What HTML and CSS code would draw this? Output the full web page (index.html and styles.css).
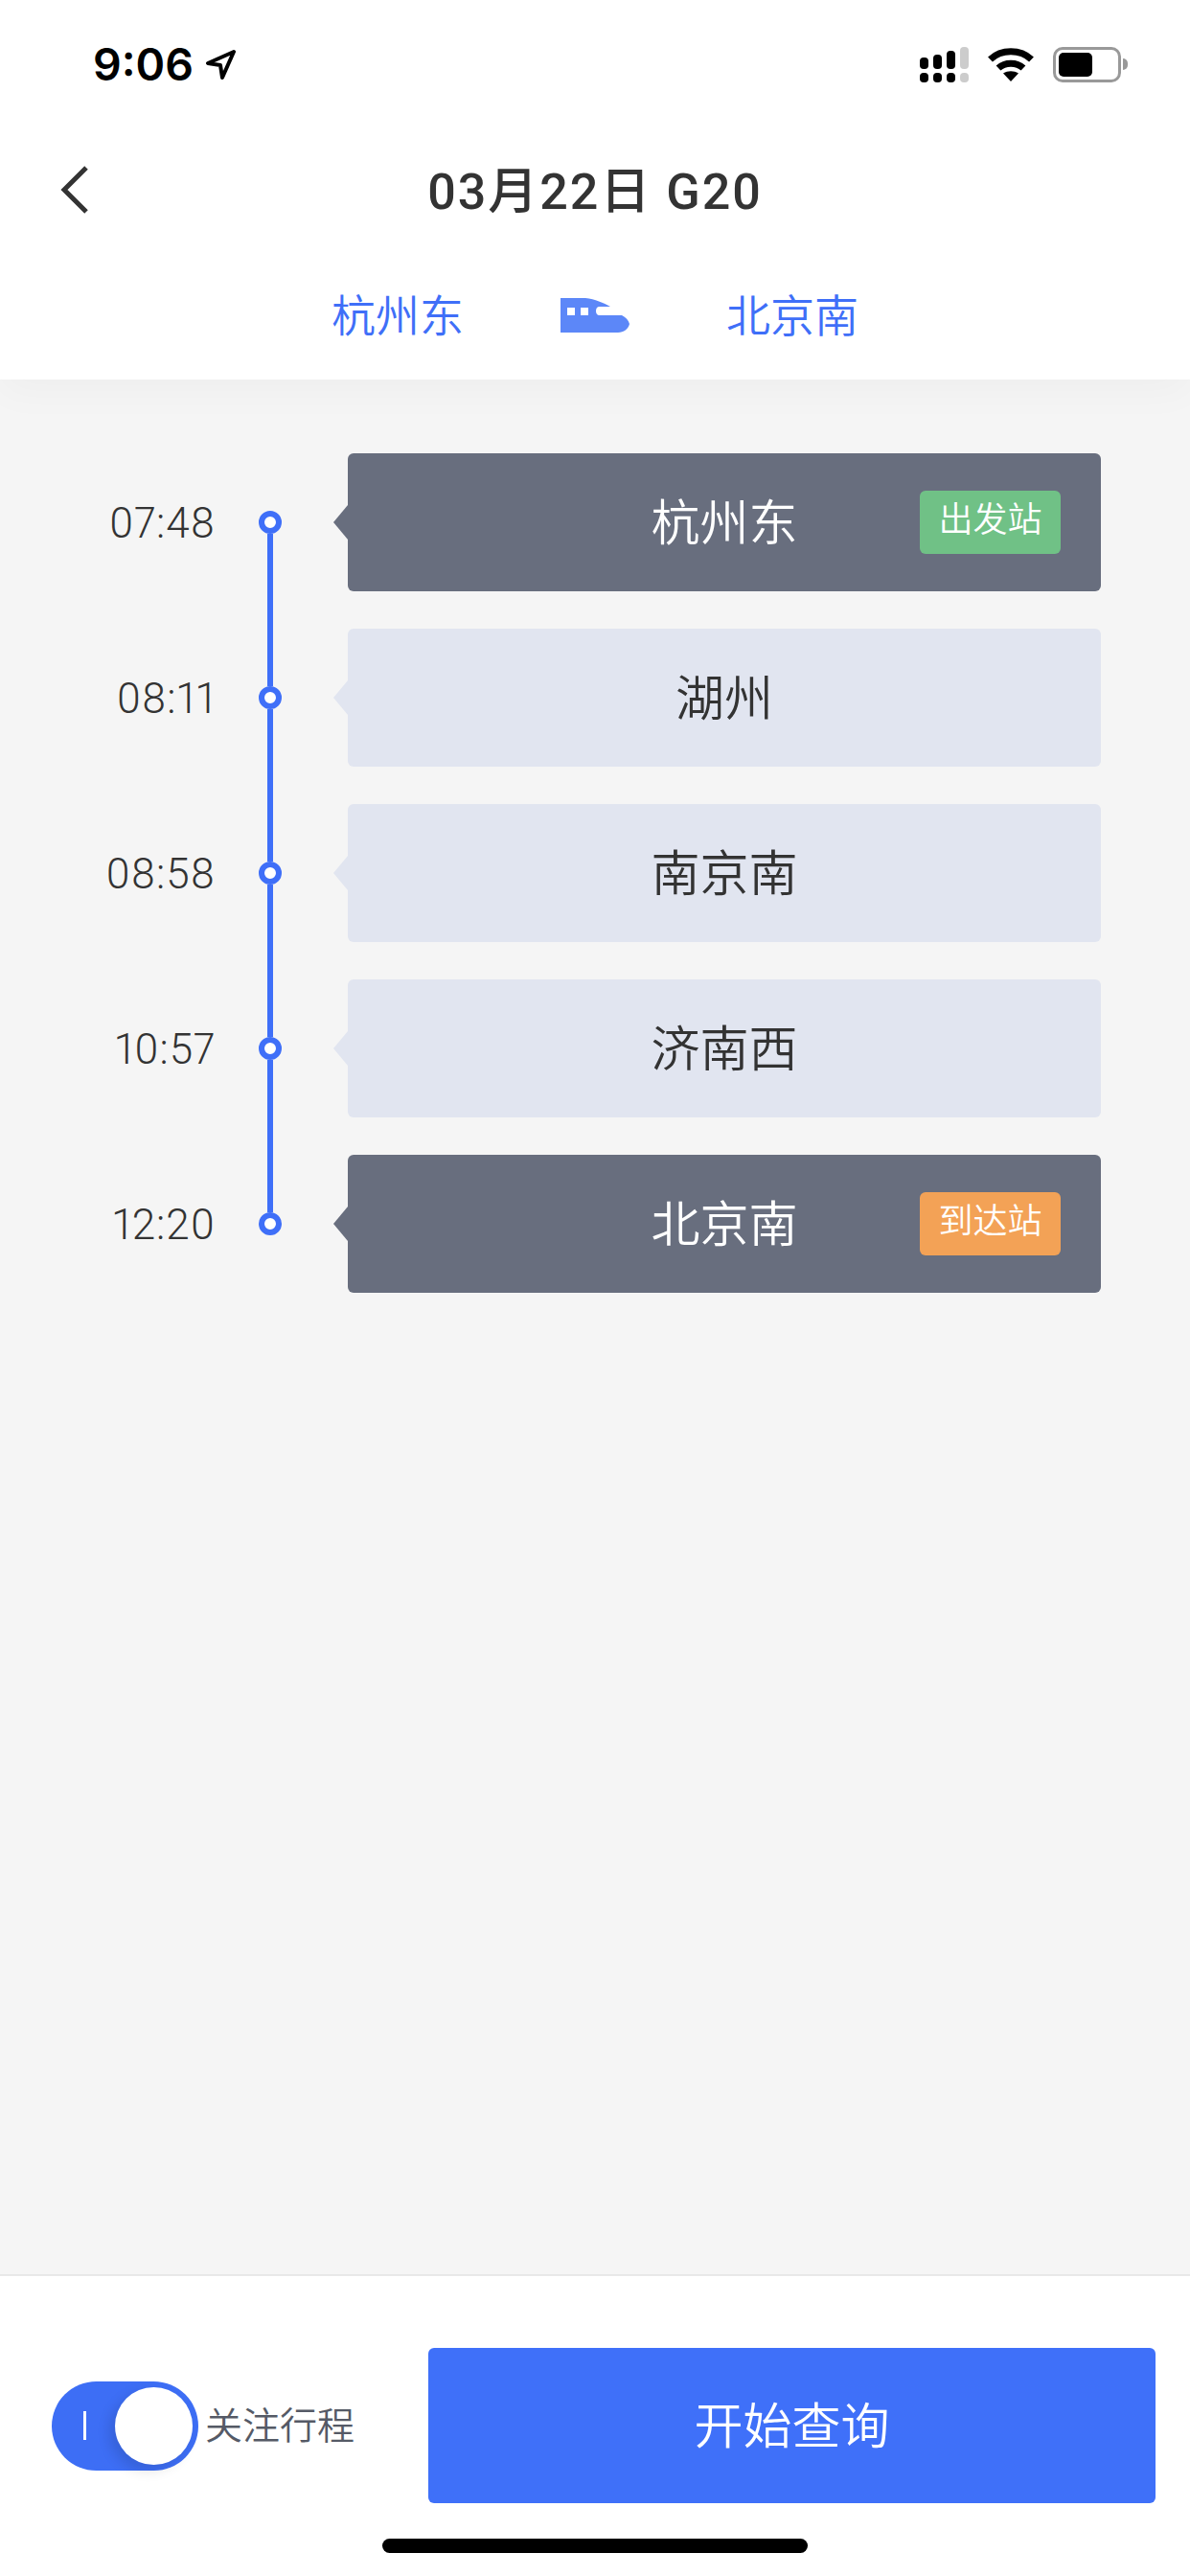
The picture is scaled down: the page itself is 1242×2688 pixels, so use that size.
FILE: index.html
```html
<!DOCTYPE html>
<html lang="zh-CN">
<head>
  <meta charset="UTF-8">
  <meta name="viewport" content="width=device-width, initial-scale=1.0">
  <title>03月22日 G20</title>
  <link rel="stylesheet" href="styles.css">
</head>
<body>
  <div class="screen">
    <header class="top">
      <div class="status-bar">
        <div class="status-left">
          <span class="clock">9:06</span>
          <svg class="loc-icon" width="32" height="32" viewBox="0 0 32 32">
            <path d="M30 3 L3 15 L16 17 L18 30 Z" fill="none" stroke="#000" stroke-width="4" stroke-linejoin="round"/>
          </svg>
        </div>
        <div class="status-right">
          <svg width="51" height="37" viewBox="0 0 51 37">
            <rect x="0" y="11" width="9" height="12" rx="4" fill="#000"/>
            <rect x="14" y="8" width="9" height="15" rx="4" fill="#000"/>
            <rect x="28" y="4" width="9" height="19" rx="4" fill="#000"/>
            <rect x="42" y="0" width="9" height="23" rx="4" fill="#ccc"/>
            <rect x="0" y="27" width="9" height="10" rx="4" fill="#000"/>
            <rect x="14" y="27" width="9" height="10" rx="4" fill="#000"/>
            <rect x="28" y="27" width="9" height="10" rx="4" fill="#000"/>
            <rect x="42" y="27" width="9" height="10" rx="4" fill="#ccc"/>
          </svg>
          <svg width="48" height="36" viewBox="0 0 48 36">
            <path d="M2.500 13 C14 2 34 2 45.500 13" fill="none" stroke="#000" stroke-width="7"/>
            <path d="M11 22 C18 15.500 30 15.500 37 22" fill="none" stroke="#000" stroke-width="7"/>
            <path d="M24 36 L16 27.500 C21 24.500 27 24.500 32 27.500 Z" fill="#000"/>
          </svg>
          <div class="battery">
            <div class="battery-body"><div class="battery-fill"></div></div>
            <div class="battery-nub"></div>
          </div>
        </div>
      </div>
      <div class="nav">
        <svg class="back" width="29" height="50" viewBox="0 0 29 50">
          <path d="M27 2 L4 25 L27 48" fill="none" stroke="#333" stroke-width="5"/>
        </svg>
        <h1>03月22日 G20</h1>
      </div>
      <div class="route">
        <span>杭州东</span>
        <svg width="72" height="36" viewBox="0 0 72 36">
          <path fill-rule="evenodd" fill="#5c87f8" d="M0 0 H26 C36 1 45 5 52 9 H40 C36 9 36 18 40 18 H64 C68 20 71 23 72 27 C71 32 66 36 60 36 H0 Z M7 10 V18 H15 V10 Z M21 10 V18 H29 V10 Z"/>
        </svg>
        <span>北京南</span>
      </div>
    </header>

    <main class="timeline">
      <div class="stop">
        <div class="time">07:48</div>
        <div class="node"></div>
        <div class="card card-dark">杭州东<span class="badge badge-green">出发站</span></div>
      </div>
      <div class="stop">
        <div class="time">08:11</div>
        <div class="node"></div>
        <div class="card">湖州</div>
      </div>
      <div class="stop">
        <div class="time">08:58</div>
        <div class="node"></div>
        <div class="card">南京南</div>
      </div>
      <div class="stop">
        <div class="time">10:57</div>
        <div class="node"></div>
        <div class="card">济南西</div>
      </div>
      <div class="stop">
        <div class="time">12:20</div>
        <div class="node"></div>
        <div class="card card-dark">北京南<span class="badge badge-orange">到达站</span></div>
      </div>
    </main>

    <footer class="bottom">
      <div class="bottom-row">
        <div class="toggle">
          <span class="toggle-mark"></span>
          <span class="toggle-knob"></span>
        </div>
        <span class="toggle-label">关注行程</span>
        <button class="query-btn" type="button">开始查询</button>
      </div>
      <div class="home-bar"></div>
    </footer>
  </div>
</body>
</html>
```
FILE: styles.css
```css
* {
  box-sizing: border-box;
}
body {
  margin: 0;
  font-family: Roboto, "Noto Sans CJK SC", sans-serif;
  color: #333;
  background-color: #f5f5f5;
}
.screen {
  display: flex;
  flex-direction: column;
  width: 1242px;
  height: 2688px;
  overflow: hidden;
}

/* header */
.top {
  position: relative;
  z-index: 1;
  background-color: #fff;
  box-shadow: 0 12px 40px rgba(0, 0, 0, 0.03);
}
.status-bar {
  display: flex;
  justify-content: space-between;
  align-items: center;
  height: 134px;
  padding: 0 65px 0 97px;
}
.status-left {
  display: flex;
  align-items: center;
  gap: 12px;
}
.clock {
  font-family: Inter, sans-serif;
  font-size: 46.5px;
  font-weight: 600;
  line-height: 1;
  color: #000;
}
.status-right {
  display: flex;
  align-items: center;
  gap: 20px;
}
.battery {
  display: flex;
  align-items: center;
  gap: 2px;
}
.battery-body {
  width: 71px;
  height: 37px;
  padding: 3px;
  border: 3px solid #999;
  border-radius: 10px;
}
.battery-fill {
  width: 35px;
  height: 100%;
  background-color: #000;
  border-radius: 5px;
}
.battery-nub {
  width: 5px;
  height: 12px;
  background-color: #999;
  border-radius: 0 6px 6px 0;
}
.nav {
  position: relative;
  display: flex;
  justify-content: center;
  align-items: center;
  height: 128px;
  padding-bottom: 6px;
}
.back {
  position: absolute;
  left: 63px;
  top: 39px;
}
.nav h1 {
  margin: 0;
  font-size: 52px;
  font-weight: 500;
  letter-spacing: 2px;
  color: #333;
}
.route {
  display: flex;
  justify-content: center;
  align-items: center;
  gap: 101px;
  height: 134px;
  font-size: 46px;
  font-weight: 350;
  color: #3f6ff8;
}
.route span {
  margin-bottom: 6px;
}

/* stops */
.timeline {
  flex: 1;
  display: flex;
  flex-direction: column;
  gap: 39px;
  padding-top: 77px;
}
.stop {
  display: flex;
  align-items: center;
  height: 144px;
}
.time {
  width: 225px;
  padding-top: 2px;
  text-align: right;
  font-size: 44px;
  font-weight: 300;
  font-feature-settings: "pnum";
  letter-spacing: 1px;
  color: #333;
}
.node {
  position: relative;
  width: 24px;
  height: 24px;
  margin-left: 45px;
  background-color: #fff;
  border: 6px solid #3f6ff8;
  border-radius: 50%;
}
.stop:not(:last-child) .node::after {
  content: "";
  position: absolute;
  left: 3px;
  top: 18px;
  width: 6px;
  height: 159px;
  background-color: #3f6ff8;
}
.card {
  position: relative;
  display: flex;
  justify-content: center;
  align-items: center;
  width: 786px;
  height: 144px;
  margin-left: 69px;
  padding-bottom: 6px;
  font-size: 51px;
  font-weight: 350;
  color: #333;
  background-color: #e1e5f0;
  border-radius: 6px;
}
.card::before {
  content: "";
  position: absolute;
  left: -15px;
  top: 54px;
  border-top: 18px solid transparent;
  border-bottom: 18px solid transparent;
  border-right: 15px solid #e1e5f0;
}
.card-dark {
  color: #fff;
  background-color: #686e7e;
}
.card-dark::before {
  border-right-color: #686e7e;
}
.badge {
  position: absolute;
  right: 42px;
  top: 39px;
  width: 147px;
  height: 66px;
  font-size: 36px;
  line-height: 62px;
  text-align: center;
  color: #fff;
  border-radius: 6px;
}
.badge-green {
  background-color: #70c186;
}
.badge-orange {
  background-color: #f3a256;
}

/* bottom bar */
.bottom {
  height: 315px;
  background-color: #fff;
  border-top: 2px solid #e8e8e8;
}
.bottom-row {
  display: flex;
  align-items: center;
  padding: 75px 36px 0 54px;
}
.toggle {
  display: flex;
  justify-content: space-between;
  align-items: center;
  width: 153px;
  height: 93px;
  padding: 6px;
  background-color: #3d6ef5;
  border-radius: 47px;
}
.toggle-mark {
  width: 3px;
  height: 30px;
  margin-left: 27px;
  background-color: #fff;
}
.toggle-knob {
  width: 81px;
  height: 81px;
  background-color: #fff;
  border-radius: 50%;
  box-shadow: -6px 6px 14px rgba(0, 0, 0, 0.12);
}
.toggle-label {
  margin-left: 7px;
  margin-bottom: 6px;
  font-size: 39px;
  font-weight: 350;
  color: #555a66;
}
.query-btn {
  width: 759px;
  height: 162px;
  margin-left: auto;
  padding: 0 0 6px;
  font-family: inherit;
  font-size: 51px;
  font-weight: 350;
  color: #fff;
  background-color: #3f70f9;
  border: none;
  border-radius: 6px;
}
.home-bar {
  width: 444px;
  height: 15px;
  margin: 37px auto 0;
  background-color: #000;
  border-radius: 8px;
}
```
